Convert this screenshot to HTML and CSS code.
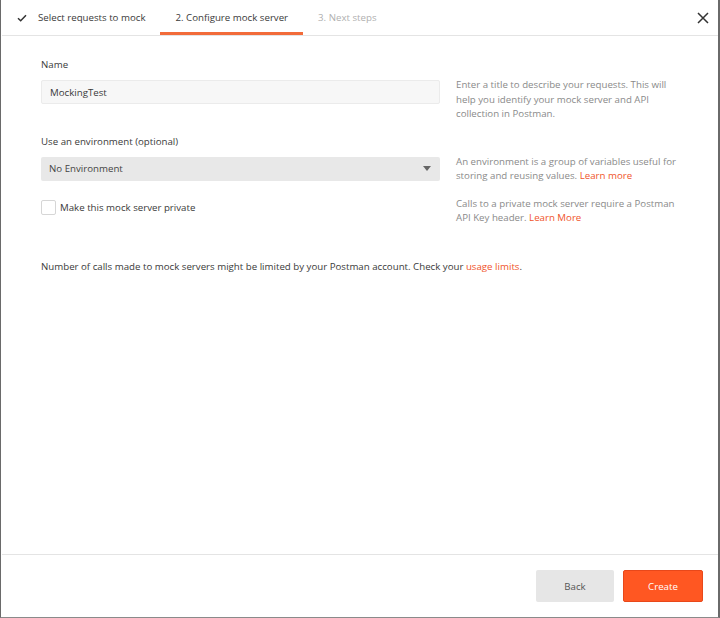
FILE: index.html
```html
<!DOCTYPE html>
<html>
<head>
<meta charset="utf-8">
<link rel="stylesheet" href="styles.css">
</head>
<body>
<div class="modal">
  <div class="header">
    <div class="tabs">
      <div class="tab done">
        <svg class="check" width="10" height="8" viewBox="0 0 10 8"><path d="M1 4.2 L3.7 6.8 L9 1.2" fill="none" stroke="#333" stroke-width="1.5"/></svg>
        <span>Select requests to mock</span>
      </div>
      <div class="tab active">2. Configure mock server</div>
      <div class="tab todo">3. Next steps</div>
    </div>
    <svg class="close" width="12" height="12" viewBox="0 0 12 12"><path d="M1 1 L11 11 M11 1 L1 11" stroke="#333" stroke-width="1.5"/></svg>
  </div>
  <div class="content">
    <div class="row row-name">
      <div class="field">
        <div class="label">Name</div>
        <div class="input">MockingTest</div>
      </div>
      <div class="help">Enter a title to describe your requests. This will help you identify your mock server and API collection in Postman.</div>
    </div>
    <div class="row row-env">
      <div class="field">
        <div class="label">Use an environment (optional)</div>
        <div class="select"><span>No Environment</span><svg width="8" height="5" viewBox="0 0 8 5"><path d="M0 0 H8 L4 5 Z" fill="#666"/></svg></div>
      </div>
      <div class="help">An environment is a group of variables useful for storing and reusing values. <a>Learn more</a></div>
    </div>
    <div class="row row-private">
      <div class="field">
        <label class="checkrow"><span class="box"></span><span>Make this mock server private</span></label>
      </div>
      <div class="help help-private">Calls to a private mock server require a Postman API Key header. <a>Learn More</a></div>
    </div>
    <p class="notice">Number of calls made to mock servers might be limited by your Postman account. Check your <a>usage limits</a>.</p>
  </div>
  <div class="footer">
    <button class="btn back">Back</button>
    <button class="btn create">Create</button>
  </div>
</div>
</body>
</html>
```

FILE: styles.css
```css
html, body {
  margin: 0;
  padding: 0;
  background: #fff;
}
body {
  width: 720px;
  height: 618px;
  font-family: "Open Sans", "Noto Sans", sans-serif;
  font-size: 9.7px;
  color: #3a3a3a;
}
.modal {
  box-sizing: border-box;
  width: 720px;
  height: 618px;
  border-left: 1px solid #6a6a6a;
  border-right: 2px solid #6a6a6a;
  border-bottom: 1px solid #8a8a8a;
  padding-left: 1px;
  display: flex;
  flex-direction: column;
}
.header {
  height: 35px;
  border-bottom: 1px solid #e4e4e4;
  display: flex;
  align-items: stretch;
  justify-content: space-between;
  flex-shrink: 0;
}
.tabs {
  display: flex;
  padding-left: 15px;
}
.tab {
  display: flex;
  align-items: center;
  padding: 0 15px;
  height: 35px;
  box-sizing: border-box;
  white-space: nowrap;
}
.tab.done {
  padding-left: 0;
}
.check {
  margin-right: 11px;
}
.tab.active {
  border-bottom: 3px solid #f26b3a;
  padding-top: 3px;
}
.tab.todo {
  color: #b0b0b0;
}
.close {
  align-self: center;
  margin-right: 9px;
}
.content {
  flex: 1;
  padding: 21px 0 0 39px;
}
.row {
  display: grid;
  grid-template-columns: 399px 222px;
  column-gap: 16px;
}
.label {
  line-height: 16px;
  margin-bottom: 7px;
}
.input, .select {
  box-sizing: border-box;
  height: 24px;
  border-radius: 2px;
  display: flex;
  align-items: center;
}
.input {
  background: #f7f7f7;
  border: 1px solid #ebebeb;
  padding-left: 8px;
}
.select {
  background: #e8e8e8;
  justify-content: space-between;
  padding: 0 9px 0 8px;
}
.select span {
  color: #444;
}
.help {
  color: #8a8a8a;
  line-height: 14.5px;
  padding-top: 21px;
}
.help a, .notice a {
  color: #f0542b;
}
.row-env {
  margin-top: 12px;
}
.row-private {
  margin-top: 13px;
}
.help-private {
  padding-top: 0;
}
.checkrow {
  display: flex;
  align-items: center;
  padding-top: 3px;
}
.box {
  box-sizing: border-box;
  width: 15px;
  height: 15px;
  border: 1px solid #d6d6d6;
  border-radius: 2px;
  background: #fff;
  margin-right: 4px;
}
.notice {
  margin: 33px 0 0;
  line-height: 16px;
}
.footer {
  height: 63px;
  border-top: 1px solid #e4e4e4;
  display: flex;
  justify-content: flex-end;
  align-items: flex-start;
  padding: 15px 15px 0 0;
  gap: 9px;
  flex-shrink: 0;
  box-sizing: border-box;
}
.btn {
  height: 32px;
  border-radius: 2px;
  font-family: "Open Sans", "Noto Sans", sans-serif;
  font-size: 9.7px;
  border: none;
  padding: 0;
}
.back {
  width: 78px;
  background: #e6e6e6;
  color: #555;
}
.create {
  width: 80px;
  background: #ff5722;
  color: #fff;
  border: 1px solid #e8481a;
}
```
